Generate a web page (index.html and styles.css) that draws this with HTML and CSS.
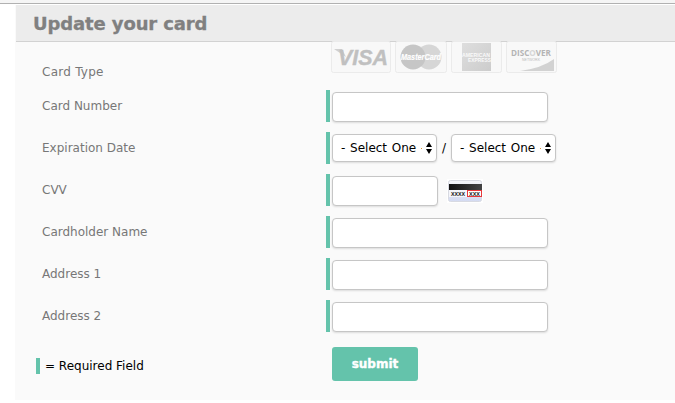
FILE: index.html
```html
<!DOCTYPE html>
<html lang="en">
<head>
    <meta charset="UTF-8">
    <meta name="viewport" content="width=device-width, initial-scale=1.0">
    <title>Update your card</title>
    <link rel="stylesheet" href="styles.css">
</head>
<body>
    <div class="top-bar"></div>
    <div class="panel">
        <h1>Update your card</h1>
        <form class="card-form">
            <div class="row card-type">
                <span class="label">Card Type</span>
                <div class="cards">
                    <svg class="card" width="60" height="32" viewBox="0 0 60 32">
                        <rect x=".5" y=".5" width="59" height="31" rx="2" fill="#f8f8f8" stroke="#ebebeb"/>
                        <path d="M3 8h8l4 8z" fill="#d0d0d0"/>
                        <text x="7" y="24" class="visa" textLength="50" lengthAdjust="spacingAndGlyphs">VISA</text>
                    </svg>
                    <svg class="card" width="52" height="32" viewBox="0 0 52 32">
                        <rect x=".5" y=".5" width="51" height="31" rx="2" fill="#f8f8f8" stroke="#ebebeb"/>
                        <circle cx="34" cy="16" r="12.5" fill="#d6d6d6"/>
                        <circle cx="18" cy="16" r="12.5" fill="#c6c6c6"/>
                        <text x="6" y="19" class="mastercard" textLength="40" lengthAdjust="spacingAndGlyphs">MasterCard</text>
                    </svg>
                    <svg class="card" width="51" height="32" viewBox="0 0 51 32">
                        <defs>
                            <linearGradient id="amex" x1="0" y1="0" x2="1" y2="1">
                                <stop offset="0" stop-color="#dedede"/>
                                <stop offset="1" stop-color="#cccccc"/>
                            </linearGradient>
                        </defs>
                        <rect x=".5" y=".5" width="50" height="31" rx="2" fill="#f8f8f8" stroke="#ebebeb"/>
                        <rect x="11" y="2" width="29" height="28" fill="url(#amex)"/>
                        <text x="11" y="15.5" class="amex" textLength="28" lengthAdjust="spacingAndGlyphs">AMERICAN</text>
                        <text x="17" y="21" class="amex" textLength="23" lengthAdjust="spacingAndGlyphs">EXPRESS</text>
                    </svg>
                    <svg class="card" width="51" height="32" viewBox="0 0 51 32">
                        <rect x=".5" y=".5" width="50" height="31" rx="2" fill="#f8f8f8" stroke="#ebebeb"/>
                        <path d="M14 30Q36 27 48 18V30z" fill="#d2d2d2"/>
                        <text x="5" y="15" class="discover" textLength="40" lengthAdjust="spacingAndGlyphs">DISC<tspan fill="#d6d6d6">O</tspan>VER</text>
                        <text x="16" y="19.5" class="network" textLength="18" lengthAdjust="spacingAndGlyphs">NETWORK</text>
                    </svg>
                </div>
            </div>
            <div class="row">
                <label class="label" for="number">Card Number</label>
                <div class="field required"><input type="text" id="number"></div>
            </div>
            <div class="row">
                <label class="label" for="month">Expiration Date</label>
                <div class="field required">
                    <span class="select">
                        <select id="month"><option>- Select One -</option></select>
                        <svg class="arrows" width="6" height="12" viewBox="0 0 6 12"><path d="M0 5l3-5 3 5zM0 7h6l-3 5z"/></svg>
                    </span>
                    <span class="slash">/</span>
                    <span class="select">
                        <select id="year"><option>- Select One -</option></select>
                        <svg class="arrows" width="6" height="12" viewBox="0 0 6 12"><path d="M0 5l3-5 3 5zM0 7h6l-3 5z"/></svg>
                    </span>
                </div>
            </div>
            <div class="row">
                <label class="label" for="cvv">CVV</label>
                <div class="field required">
                    <input type="text" id="cvv" class="short">
                    <svg class="cvv-icon" width="36" height="24" viewBox="0 0 36 24">
                        <defs>
                            <linearGradient id="back" x1="0" y1="0" x2="0" y2="1">
                                <stop offset="0" stop-color="#f4f5f8"/>
                                <stop offset="1" stop-color="#d3daf2"/>
                            </linearGradient>
                            <linearGradient id="stripe">
                                <stop offset="0" stop-color="#111"/>
                                <stop offset="1" stop-color="#444"/>
                            </linearGradient>
                        </defs>
                        <rect width="36" height="24" fill="#fff"/>
                        <rect x="1.5" y="1.5" width="33" height="21" rx="2" fill="url(#back)" stroke="#d8dae2"/>
                        <rect x="2" y="5" width="33" height="6" fill="url(#stripe)"/>
                        <rect x="2" y="11" width="32" height="7" fill="#f4f5fa"/>
                        <text x="4" y="17" class="digits" textLength="14" lengthAdjust="spacingAndGlyphs">XXXX</text>
                        <rect x="20.5" y="11.5" width="14" height="6" fill="#fff" stroke="#e8383b"/>
                        <text x="22" y="17" class="digits" textLength="11" lengthAdjust="spacingAndGlyphs">XXX</text>
                    </svg>
                </div>
            </div>
            <div class="row">
                <label class="label" for="holder">Cardholder Name</label>
                <div class="field required"><input type="text" id="holder"></div>
            </div>
            <div class="row">
                <label class="label" for="address1">Address 1</label>
                <div class="field required"><input type="text" id="address1"></div>
            </div>
            <div class="row">
                <label class="label" for="address2">Address 2</label>
                <div class="field required"><input type="text" id="address2"></div>
            </div>
            <div class="form-footer">
                <div class="legend"><span class="legend-bar"></span><span class="legend-text">= Required Field</span></div>
                <button type="button" class="btn">submit</button>
            </div>
        </form>
    </div>
</body>
</html>
```
FILE: styles.css
```css
body {
    margin: 0;
    background-color: #fff;
    font-family: Verdana, "DejaVu Sans", sans-serif;
    font-size: 12px;
    color: #000;
    overflow: hidden;
}

.top-bar {
    height: 3px;
    background-color: #f5f5f5;
    border-bottom: 1px solid #b1b1b1;
    margin-bottom: 1px;
}

.panel {
    margin-left: 15px;
    height: 395px;
    background-color: #fafafa;
}

h1 {
    margin: 0 0 0 1px;
    padding-left: 17px;
    height: 36px;
    line-height: 37px;
    font-size: 18px;
    letter-spacing: -0.12px;
    color: #808080;
    -webkit-text-stroke: 0.3px #808080;
    background-color: #ececec;
    border-bottom: 1px solid #d2d2d2;
}

.row {
    display: flex;
    height: 32px;
    margin-bottom: 10px;
}

.label {
    width: 284px;
    padding-left: 27px;
    line-height: 33px;
    color: #777;
}

/* the logos sit on the heading's bottom border */
.card-type {
    height: 49px;
    margin: -1px 0 0;
}

.card-type .label {
    width: 289px;
    line-height: 62px;
    letter-spacing: 0.25px;
}

.cards {
    display: flex;
    gap: 4px;
}

.visa {
    font: italic bold 22px "Liberation Sans", sans-serif;
    fill: #c0c0c0;
    stroke: #c0c0c0;
    stroke-width: .4px;
}

.mastercard {
    font: italic bold 8.5px "Liberation Sans", sans-serif;
    fill: #fff;
    stroke: #fff;
    stroke-width: .2px;
}

.amex {
    font: bold 6px "Liberation Sans", sans-serif;
    fill: #fafafa;
}

.discover {
    font: bold 9px "Open Sans", sans-serif;
    fill: #b4b4b4;
}

.network {
    font: 3px "Liberation Sans", sans-serif;
    fill: #bbb;
}

.field {
    display: flex;
    align-items: flex-end;
}

.required {
    border-left: 4px solid #64c3ab;
    padding-left: 2px;
}

input,
select {
    box-sizing: border-box;
    width: 216px;
    height: 30px;
    margin: 0;
    border: 1px solid #c6c6c6;
    border-radius: 4px;
    background-color: #fff;
    box-shadow: 0 1px 2px rgba(0, 0, 0, 0.12);
}

input.short {
    width: 106px;
}

.select {
    position: relative;
    height: 30px;
}

select {
    appearance: none;
    display: block;
    width: 105px;
    height: 28px;
    padding: 0 14px 0 8px;
    font: 12px Verdana, "DejaVu Sans", sans-serif;
    word-spacing: 0.9px;
    color: #000;
}

.arrows {
    position: absolute;
    right: 5px;
    top: 8px;
}

.slash {
    width: 14px;
    line-height: 32px;
    text-align: center;
}

.cvv-icon {
    margin: 0 0 3px 9px;
}

.digits {
    font: bold 6px "Liberation Sans", sans-serif;
    fill: #111;
}

.form-footer {
    display: flex;
    padding: 5px 0 0 21px;
}

.legend {
    display: flex;
    align-items: center;
    width: 296px;
    height: 38px;
}

.legend-bar {
    width: 4px;
    height: 16px;
    margin-right: 5px;
    background-color: #64c3ab;
}

.legend-text {
    padding-bottom: 1px;
}

.btn {
    width: 86px;
    height: 34px;
    padding: 0;
    border: none;
    border-radius: 3px;
    background-color: #64c3ab;
    color: #fff;
    font: bold 12px Verdana, "DejaVu Sans", sans-serif;
    -webkit-text-stroke: 0.4px #fff;
}
```
